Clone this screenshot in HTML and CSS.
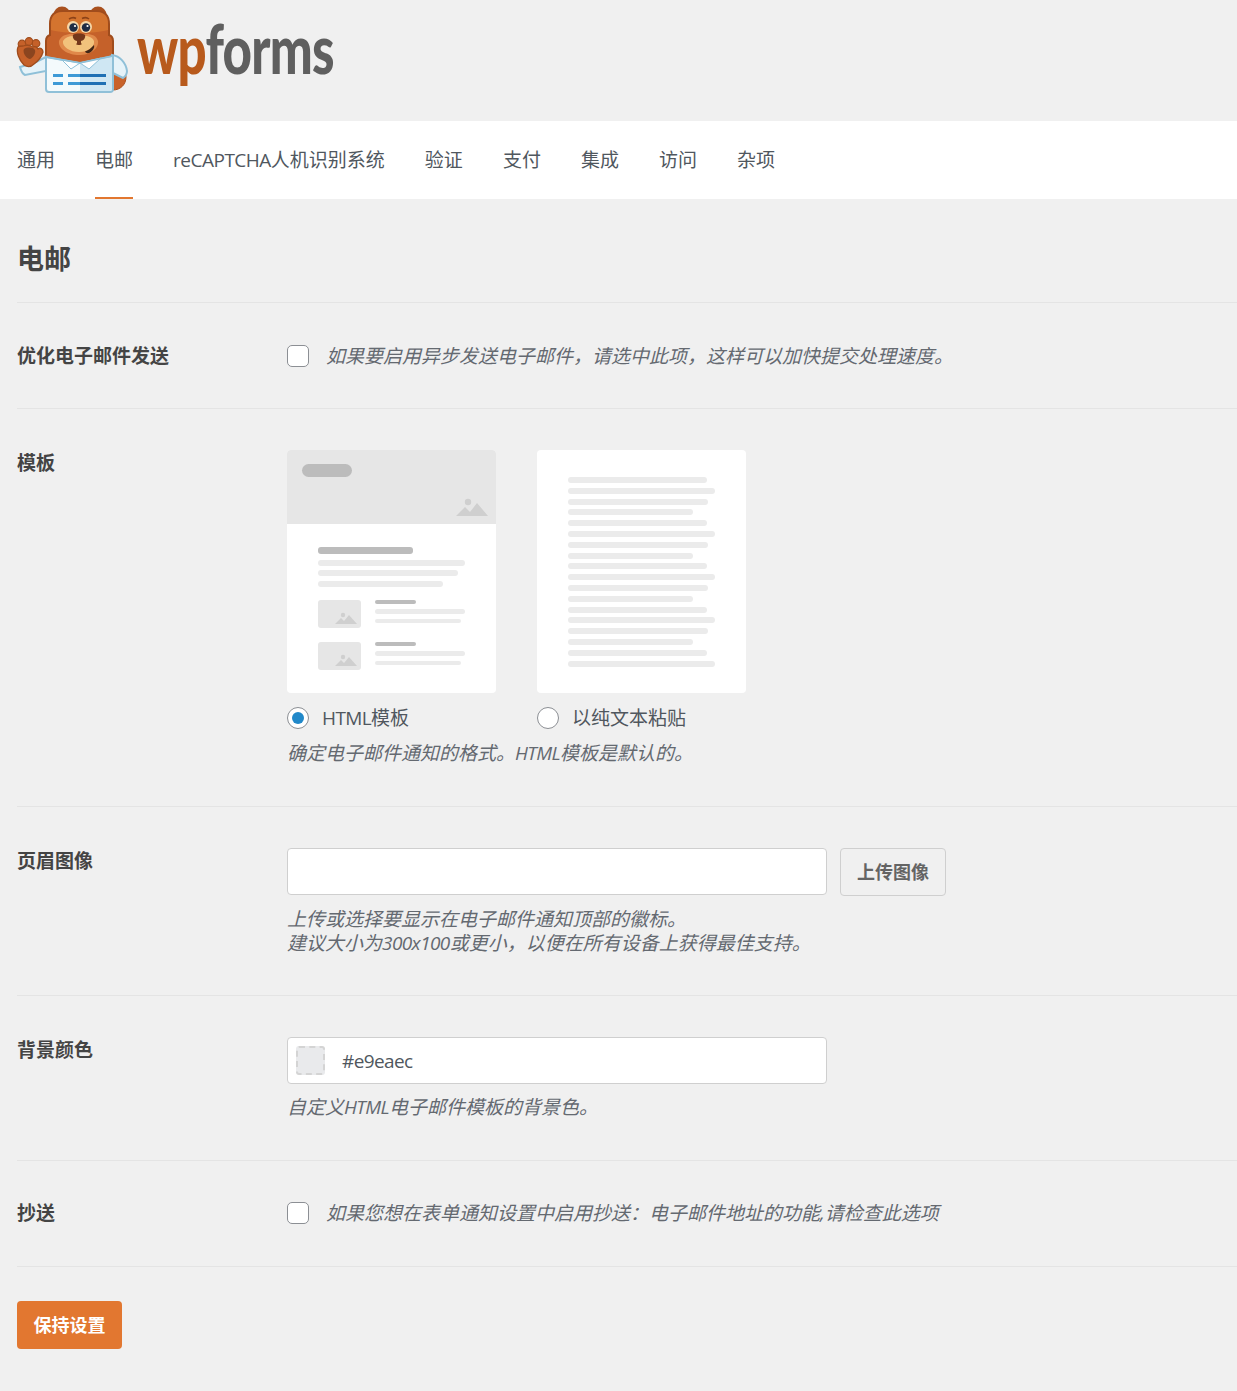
FILE: index.html
```html
<!DOCTYPE html>
<html lang="zh-CN">
<head>
<meta charset="utf-8">
<title>WPForms 设置</title>
<link rel="stylesheet" href="styles.css">
</head>
<body>
<header class="brand">
  <svg class="bear" viewBox="0 0 130 100" width="130" height="100" aria-hidden="true">
    <!-- back hand -->
    <path d="M112 66c8-2 14 3 14 11s-6 13-13 13z" fill="#c9622a" stroke="#a9501e" stroke-width="1"/>
    <!-- ears -->
    <circle cx="62" cy="15" r="8.500" fill="#a9501e"/><circle cx="62" cy="16" r="5" fill="#dc8c48"/>
    <circle cx="98" cy="15" r="8.500" fill="#a9501e"/><circle cx="98" cy="16" r="5" fill="#dc8c48"/>
    <!-- head and body -->
    <path d="M50 24c0-9 4-13 13-13h33c9 0 13 4 13 13v11c3 1 4 3 4 6v24H46V41c0-3 1-5 4-6z" fill="#c5612a" stroke="#a04c1c" stroke-width="2"/>
    <path d="M51 24c0-8 4-12 12-12h33c8 0 12 4 12 12v6c-14 4-43 4-57 0z" fill="#d4742f"/>
    <!-- cheeks and muzzle -->
    <path d="M59 41c3-7 11-8 20-6 9-2 17-1 19 6 1 8-8 14-19 14s-21-6-20-14z" fill="#e0894a"/>
    <path d="M63 41c3-5 10-6 16-4 6-2 13-1 15 4 1 6-6 11-15 11s-17-5-16-11z" fill="#f2c27c"/>
    <!-- eyes and brows -->
    <circle cx="73" cy="27" r="6" fill="#f6d7a8"/><circle cx="86" cy="27" r="6" fill="#f6d7a8"/>
    <circle cx="73.500" cy="27.500" r="4.200" fill="#1f2c44"/><circle cx="86" cy="27.500" r="4.200" fill="#1f2c44"/>
    <circle cx="75" cy="26" r="1.100" fill="#fff"/><circle cx="87.500" cy="26" r="1.100" fill="#fff"/>
    <path d="M69 19q4-2.500 7-.500M82 18.500q4-2 7 .500" fill="none" stroke="#8c4218" stroke-width="1.600"/>
    <!-- nose and mouth -->
    <path d="M73 35c2-2 10-2 12 0 1 3-2 6-4 6v2c1 1 1 2-2 2s-3-1-2-2v-2c-2 0-5-3-4-6z" fill="#74371a"/>
    <path d="M94 45c1 3-2 7-5 8-2 .500-4-.500-4-1.500 3-1 6-3 9-6.500z" fill="#3f2618"/>
    <!-- sleeve -->
    <path d="M46 57 34 63l-14 4c1 4 3 7 5 8l21-4z" fill="#e6f3f9" stroke="#8fc0d8" stroke-width="2"/>
    <!-- raised hand -->
    <circle cx="22" cy="44" r="3.800" fill="#c5612a" stroke="#a04c1c" stroke-width="1.200"/>
    <circle cx="29" cy="41.500" r="3.800" fill="#c5612a" stroke="#a04c1c" stroke-width="1.200"/>
    <circle cx="36" cy="43.500" r="3.800" fill="#c5612a" stroke="#a04c1c" stroke-width="1.200"/>
    <path d="M18 47c-2 5 1 13 6 18 3 2 7 2 10-1 4-3 8-8 9-12 0-3-3-5-5-3-1-2-3-3-5-2-3-2-8-2-10-1-2 0-4 0-5 1z" fill="#c5612a" stroke="#a04c1c" stroke-width="1.300"/>
    <path d="M24 49c3-2 9-2 11 1 1 3-2 8-5 9-3 0-8-6-6-10z" fill="#8b451f"/>
    <!-- right sleeve -->
    <path d="M112 55c8 1 14 8 15 16 0 3-1 5-4 7l-10-5z" fill="#e6f3f9" stroke="#8fc0d8" stroke-width="2"/>
    <!-- shirt -->
    <path d="M46 57 80 63l33-7v33c0 2-1 3-3 3H49c-2 0-3-1-3-3z" fill="#f4fafc" stroke="#8fc0d8" stroke-width="2"/>
    <path d="M80 63 112 57v32c0 1-1 2-2 2H80z" fill="#cfe7f3"/>
    <path d="M62 60 80 63 71 69z" fill="#fff" stroke="#8fc0d8" stroke-width="1"/>
    <path d="M80 63 101 58 89 69z" fill="#fff" stroke="#8fc0d8" stroke-width="1"/>
    <path d="M46 57 80 63l33-7" fill="none" stroke="#8fc0d8" stroke-width="1.500"/>
    <!-- form rows -->
    <rect x="53" y="74" width="10" height="3" fill="#3e9ad6"/><rect x="68" y="74" width="12" height="3" fill="#3e9ad6"/><rect x="80" y="74" width="26" height="3" fill="#1e70b4"/>
    <rect x="53" y="82" width="10" height="3" fill="#3e9ad6"/><rect x="68" y="82" width="12" height="3" fill="#3e9ad6"/><rect x="80" y="82" width="26" height="3" fill="#1e70b4"/>
  </svg>
  <span class="wordmark"><span class="wm-wp">wp</span><span class="wm-forms">forms</span></span>
</header>

<nav class="tabs">
  <a class="tab">通用</a>
  <a class="tab is-active">电邮</a>
  <a class="tab"><span class="lat">reCAPTCHA</span>人机识别系统</a>
  <a class="tab">验证</a>
  <a class="tab">支付</a>
  <a class="tab">集成</a>
  <a class="tab">访问</a>
  <a class="tab">杂项</a>
</nav>

<main class="settings">
  <h1 class="page-title">电邮</h1>

  <section class="row">
    <div class="row-label">优化电子邮件发送</div>
    <div class="check-line">
      <span class="checkbox"></span>
      <span class="desc">如果要启用异步发送电子邮件，请选中此项，这样可以加快提交处理速度。</span>
    </div>
  </section>

  <section class="row row-loose">
    <div class="row-label row-label-low">模板</div>
    <div>
      <div class="templates">
        <div class="template">
          <div class="tpl-card tpl-html">
            <div class="tpl-banner">
              <span class="tpl-pill"></span>
              <svg class="tpl-mtn" viewBox="0 0 32 18" width="32" height="18"><circle cx="12" cy="4" r="3.2" fill="#cfcfcf"/><path d="M0 18 9 9l5 5 7-9 11 13z" fill="#cfcfcf"/></svg>
            </div>
            <div class="tpl-body">
              <span class="ln dark w95"></span>
              <span class="ln w147"></span>
              <span class="ln w140"></span>
              <span class="ln w125"></span>
              <div class="tpl-item">
                <div class="tpl-thumb"><svg viewBox="0 0 22 12" width="22" height="12"><circle cx="8" cy="3" r="2.2" fill="#cfcfcf"/><path d="M0 12 6 6l3 3 5-6 8 9z" fill="#cfcfcf"/></svg></div>
                <div class="tpl-lines"><span class="ln dark w41"></span><span class="ln w90"></span><span class="ln w86"></span></div>
              </div>
              <div class="tpl-item">
                <div class="tpl-thumb"><svg viewBox="0 0 22 12" width="22" height="12"><circle cx="8" cy="3" r="2.2" fill="#cfcfcf"/><path d="M0 12 6 6l3 3 5-6 8 9z" fill="#cfcfcf"/></svg></div>
                <div class="tpl-lines"><span class="ln dark w41"></span><span class="ln w90"></span><span class="ln w86"></span></div>
              </div>
            </div>
          </div>
          <label class="radio-line"><span class="radio is-on"></span><span><span class="lat">HTML</span>模板</span></label>
        </div>
        <div class="template">
          <div class="tpl-card tpl-plain">
            <span class="ln w139"></span><span class="ln w147"></span><span class="ln w140"></span><span class="ln w125"></span>
            <span class="ln w139"></span><span class="ln w147"></span><span class="ln w140"></span><span class="ln w125"></span>
            <span class="ln w139"></span><span class="ln w147"></span><span class="ln w140"></span><span class="ln w125"></span>
            <span class="ln w139"></span><span class="ln w147"></span><span class="ln w140"></span><span class="ln w125"></span>
            <span class="ln w139"></span><span class="ln w147"></span>
          </div>
          <label class="radio-line"><span class="radio"></span>以纯文本粘贴</label>
        </div>
      </div>
      <p class="desc desc-block">确定电子邮件通知的格式。<span class="lat">HTML</span>模板是默认的。</p>
    </div>
  </section>

  <section class="row">
    <div class="row-label row-label-low">页眉图像</div>
    <div>
      <div class="field-line">
        <div class="input"></div>
        <button class="btn-upload" type="button">上传图像</button>
      </div>
      <p class="desc desc-block">上传或选择要显示在电子邮件通知顶部的徽标。<br>建议大小为<span class="lat">300x100</span>或更小，以便在所有设备上获得最佳支持。</p>
    </div>
  </section>

  <section class="row row-loose">
    <div class="row-label row-label-low">背景颜色</div>
    <div>
      <div class="input input-color"><span class="swatch"></span><span class="lat">#e9eaec</span></div>
      <p class="desc desc-block">自定义<span class="lat">HTML</span>电子邮件模板的背景色。</p>
    </div>
  </section>

  <section class="row row-raised">
    <div class="row-label">抄送</div>
    <div class="check-line">
      <span class="checkbox"></span>
      <span class="desc">如果您想在表单通知设置中启用抄送：电子邮件地址的功能,请检查此选项</span>
    </div>
  </section>

  <button class="btn-save" type="button">保持设置</button>
</main>
</body>
</html>
```

FILE: styles.css
```css
* { box-sizing: border-box; }

html, body { margin: 0; padding: 0; }

body {
  background: #f0f0f0;
  color: #50575e;
  font-family: "Open Sans", "Noto Sans CJK SC", sans-serif;
  font-size: 19px;
  line-height: 24px;
}

.lat { letter-spacing: -0.6px; }

.brand {
  height: 121px;
  display: flex;
  align-items: flex-start;
  overflow: hidden;
}

.bear { display: block; flex: none; filter: blur(0.3px); }

.wordmark {
  display: inline-block;
  margin: 9px 0 0 7px;
  font-family: "Lato", sans-serif;
  font-weight: 900;
  font-size: 68px;
  line-height: 78px;
  letter-spacing: -1px;
  white-space: nowrap;
  transform: scaleX(0.75);
  transform-origin: left top;
  filter: blur(0.4px);
}

.wm-wp { color: #b85a1c; }
.wm-forms { color: #5f5f5f; }

.tabs {
  height: 78px;
  background: #fff;
  padding-left: 17px;
  display: flex;
  gap: 40px;
}

.tab {
  height: 78px;
  line-height: 78px;
  color: #50575e;
}

.tab .lat { letter-spacing: -0.5px; }

.tab.is-active {
  box-shadow: inset 0 -2px 0 #e27730;
}

.settings { padding-left: 17px; }

.page-title {
  margin: 0;
  height: 104px;
  padding-top: 42px;
  border-bottom: 1px solid #e4e4e4;
  font-size: 27px;
  line-height: 36px;
  font-weight: 700;
  color: #444;
}

.row {
  display: grid;
  grid-template-columns: 270px 1fr;
  padding: 41px 0 40px;
  border-bottom: 1px solid #e4e4e4;
}

.row-loose { padding-bottom: 41px; }
.row-raised { padding: 40px 0 41px; }

.row-label {
  font-weight: 700;
  color: #444;
}

.row-label-low { padding-top: 1px; }

.check-line {
  display: flex;
  align-items: center;
  gap: 17px;
  height: 24px;
}

.checkbox {
  width: 22px;
  height: 22px;
  flex: none;
  background: #fff;
  border: 1px solid #8c8f94;
  border-radius: 5px;
}

.desc {
  font-style: italic;
  color: #646970;
}

.desc-block { margin: 11px 0 0; }

.templates {
  display: flex;
  gap: 41px;
}

.template { width: 209px; }

.tpl-card {
  height: 243px;
  background: #fff;
  border-radius: 4px;
  overflow: hidden;
}

.tpl-banner {
  height: 74px;
  background: #e6e6e6;
  position: relative;
}

.tpl-pill {
  position: absolute;
  left: 15px;
  top: 14px;
  width: 50px;
  height: 13px;
  border-radius: 7px;
  background: #bcbcbc;
}

.tpl-mtn {
  position: absolute;
  right: 8px;
  top: 48px;
}

.tpl-body {
  padding: 23px 0 0 31px;
  display: flex;
  flex-direction: column;
  align-items: flex-start;
}

.ln {
  display: block;
  height: 6px;
  border-radius: 3px;
  background: #ebebeb;
  margin-bottom: 4.8px;
}

.ln.dark { background: #bcbcbc; }

.w41 { width: 41px; height: 5px; }
.w86 { width: 86px; }
.w90 { width: 90px; }
.w95 { width: 95px; height: 7px; margin-bottom: 5.5px; }
.w125 { width: 125px; }
.w139 { width: 139px; }
.w140 { width: 140px; }
.w147 { width: 147px; }

.tpl-item {
  display: flex;
  gap: 14px;
  margin-top: 8px;
}

.tpl-item + .tpl-item { margin-top: 14px; }

.tpl-thumb {
  width: 43px;
  height: 28px;
  background: #e6e6e6;
  border-radius: 3px;
  display: flex;
  align-items: flex-end;
  justify-content: flex-end;
  padding: 0 4px 4px 0;
}

.tpl-thumb svg { display: block; }

.tpl-lines {
  display: flex;
  flex-direction: column;
  align-items: flex-start;
  height: 28px;
}

.tpl-lines .w41 { margin-bottom: 5.8px; }

.tpl-plain {
  padding-top: 27px;
  padding-left: 31px;
}

.radio-line {
  display: flex;
  align-items: center;
  gap: 13px;
  margin-top: 13px;
  height: 24px;
  color: #50575e;
}

.radio {
  width: 22px;
  height: 22px;
  flex: none;
  border-radius: 50%;
  background: #fff;
  border: 1px solid #8c8f94;
  display: flex;
  align-items: center;
  justify-content: center;
}

.radio.is-on::before {
  content: "";
  width: 12px;
  height: 12px;
  border-radius: 50%;
  background: #2188c9;
}

.field-line {
  display: flex;
  gap: 13px;
  align-items: flex-start;
}

.input {
  width: 540px;
  height: 47px;
  background: #fff;
  border: 1px solid #cfcfcf;
  border-radius: 4px;
}

.input-color {
  display: flex;
  align-items: center;
  gap: 17px;
  padding-left: 8px;
  color: #50575e;
}

.swatch {
  width: 29px;
  height: 29px;
  background: #e9eaec;
  border: 2px dashed #d4d4d4;
  border-radius: 3px;
}

.btn-upload {
  width: 106px;
  height: 48px;
  background: #f0f0f0;
  border: 1px solid #cfcfcf;
  border-radius: 4px;
  font: 700 18px/24px "Open Sans", "Noto Sans CJK SC", sans-serif;
  color: #646464;
  padding: 0;
}

.btn-save {
  display: block;
  margin-top: 34px;
  width: 105px;
  height: 48px;
  background: #e27730;
  border: 0;
  border-radius: 4px;
  font: 700 18px/24px "Open Sans", "Noto Sans CJK SC", sans-serif;
  color: #fff;
  padding: 0;
}
```
